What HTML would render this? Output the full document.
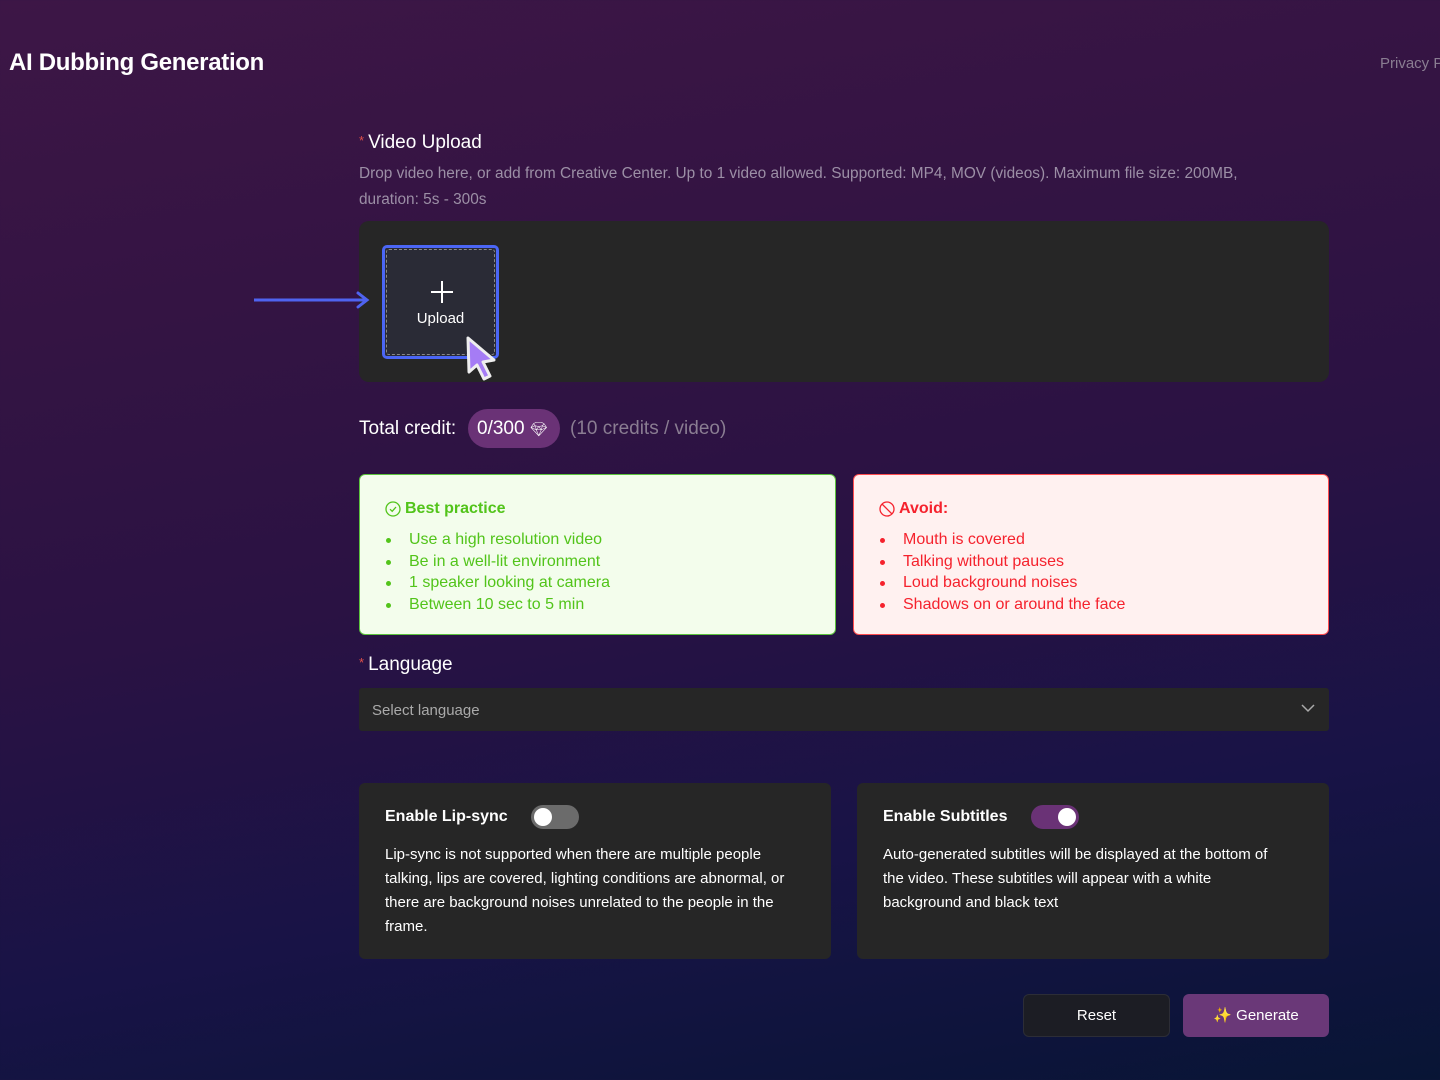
<!DOCTYPE html>
<html><head><style>
*{box-sizing:border-box;margin:0;padding:0}
body{width:1440px;height:1080px;overflow:hidden;font-family:"Liberation Sans",sans-serif;position:relative;
background:linear-gradient(170deg,#3d1646 0%,#341443 25%,#2a1243 50%,#181346 75%,#081535 100%);}
.abs{position:absolute}
h1{position:absolute;left:9px;top:49px;font-size:24px;font-weight:bold;color:#fff;letter-spacing:-0.3px}
.priv{left:1380px;top:55px;color:#8a7d92;font-size:15px;white-space:nowrap}
.lbl{color:#fff;font-size:19px}
.star{color:#e0504a;font-size:13px;vertical-align:3px;margin-right:4px}
.desc{color:#9c8fa6;font-size:15.4px;line-height:26px}
.card{background:#262626;border-radius:10px}
.box{border-radius:6px;padding:25px 25px}
.box ul{list-style:none;margin-top:11px}
.box li{font-size:16px;line-height:21.5px;padding-left:24px;position:relative}
.box li:before{content:"";position:absolute;left:1px;top:9px;width:5px;height:5px;border-radius:50%;background:currentColor}
.hd{font-weight:bold;font-size:16px;display:flex;align-items:center;gap:4px}
.toggle{width:48px;height:24px;border-radius:12px;position:absolute}
.toggle i{position:absolute;top:3px;width:18px;height:18px;border-radius:50%;background:#fff}
.ct{color:#fff;font-size:15px;line-height:24px}
</style></head><body>
<h1>AI Dubbing Generation</h1>
<div class="abs priv">Privacy P</div>

<div class="abs lbl" style="left:359px;top:132px"><span class="star">*</span>Video Upload</div>
<div class="abs desc" style="left:359px;top:161px;width:930px">Drop video here, or add from Creative Center. Up to 1 video allowed. Supported: MP4, MOV (videos). Maximum file size: 200MB, duration: 5s - 300s</div>
<div class="abs card" style="left:359px;top:221px;width:970px;height:161px"></div>
<svg class="abs" style="left:250px;top:288px" width="124" height="24"><line x1="4" y1="12" x2="116" y2="12" stroke="#4f63f0" stroke-width="3"/><path d="M108 5 L117 12 L108 19" fill="none" stroke="#4f63f0" stroke-width="3" stroke-linecap="round"/></svg>
<div class="abs" style="left:382px;top:245px;width:117px;height:114px;border:3px solid #4b66f5;border-radius:5px;background:#2a2b36">
 <div style="position:absolute;inset:1px;border:1px dashed #888;border-radius:3px"></div>
 <svg class="abs" style="left:45px;top:32px" width="24" height="24"><path d="M12 1V23M1 12H23" stroke="#fff" stroke-width="2"/></svg>
 <div class="abs" style="left:0;width:111px;top:62px;text-align:center;color:#fff;font-size:15px">Upload</div>
</div>
<svg class="abs" style="left:462px;top:334px" width="40" height="50"><path d="M6 4 L32 26 L21 28 L28 42 L22 45 L15 31 L7 38 Z" fill="#a57cf5" stroke="#eee" stroke-width="3" stroke-linejoin="round"/></svg>

<div class="abs lbl" style="left:359px;top:418px">Total credit:</div>
<div class="abs" style="left:468px;top:409px;width:92px;height:39px;border-radius:20px;background:#6a3276;color:#fff;font-size:19px;line-height:39px;padding-left:9px">0/300 <span style="font-size:14px">💎︎</span></div>
<div class="abs" style="left:570px;top:418px;color:#8a7d92;font-size:19px">(10 credits / video)</div>

<div class="abs box" style="left:359px;top:474px;width:477px;height:161px;background:#f3fdec;border:1.5px solid #5cc33d;color:#52c41a">
 <div class="hd"><svg width="16" height="16"><circle cx="8" cy="8" r="7" fill="none" stroke="#52c41a" stroke-width="1.3"/><path d="M5 8.2 L7.2 10.3 L11 6" fill="none" stroke="#52c41a" stroke-width="1.3"/></svg>Best practice</div>
 <ul><li>Use a high resolution video</li><li>Be in a well-lit environment</li><li>1 speaker looking at camera</li><li>Between 10 sec to 5 min</li></ul>
</div>
<div class="abs box" style="left:853px;top:474px;width:476px;height:161px;background:#fff1f0;border:1.5px solid #ff4d4f;color:#f5222d">
 <div class="hd"><svg width="16" height="16"><circle cx="8" cy="8" r="7" fill="none" stroke="#f5222d" stroke-width="1.3"/><path d="M3 3 L13 13" stroke="#f5222d" stroke-width="1.3"/></svg>Avoid:</div>
 <ul><li>Mouth is covered</li><li>Talking without pauses</li><li>Loud background noises</li><li>Shadows on or around the face</li></ul>
</div>

<div class="abs lbl" style="left:359px;top:654px"><span class="star">*</span>Language</div>
<div class="abs" style="left:359px;top:688px;width:970px;height:43px;background:#262626;border-radius:3px;color:#aaa;font-size:15px;line-height:46px;padding-left:13px">Select language
 <svg class="abs" style="right:14px;top:15px" width="14" height="10"><path d="M1 2 L7 8 L13 2" fill="none" stroke="#aaa" stroke-width="1.5"/></svg></div>

<div class="abs card" style="left:359px;top:783px;width:472px;height:176px;border-radius:6px;padding:25px 26px">
 <div style="color:#fff;font-weight:bold;font-size:16px">Enable Lip-sync</div>
 <div class="toggle" style="left:172px;top:22px;background:#6b6b6b"><i style="left:3px"></i></div>
 <div class="ct" style="margin-top:17px">Lip-sync is not supported when there are multiple people talking, lips are covered, lighting conditions are abnormal, or there are background noises unrelated to the people in the frame.</div>
</div>
<div class="abs card" style="left:857px;top:783px;width:472px;height:176px;border-radius:6px;padding:25px 46px 25px 26px">
 <div style="color:#fff;font-weight:bold;font-size:16px">Enable Subtitles</div>
 <div class="toggle" style="left:174px;top:22px;background:#6a3276"><i style="left:27px"></i></div>
 <div class="ct" style="margin-top:17px">Auto-generated subtitles will be displayed at the bottom of the video. These subtitles will appear with a white background and black text</div>
</div>

<div class="abs" style="left:1023px;top:994px;width:147px;height:43px;background:#1c1d24;border:1px solid #2c2d36;border-radius:6px;color:#fff;font-size:15px;text-align:center;line-height:42px">Reset</div>
<div class="abs" style="left:1183px;top:994px;width:146px;height:43px;background:#6a3878;border-radius:6px;color:#fff;font-size:15px;text-align:center;line-height:43px"><span style="color:#f5c542">✨</span> Generate</div>
</body></html>
